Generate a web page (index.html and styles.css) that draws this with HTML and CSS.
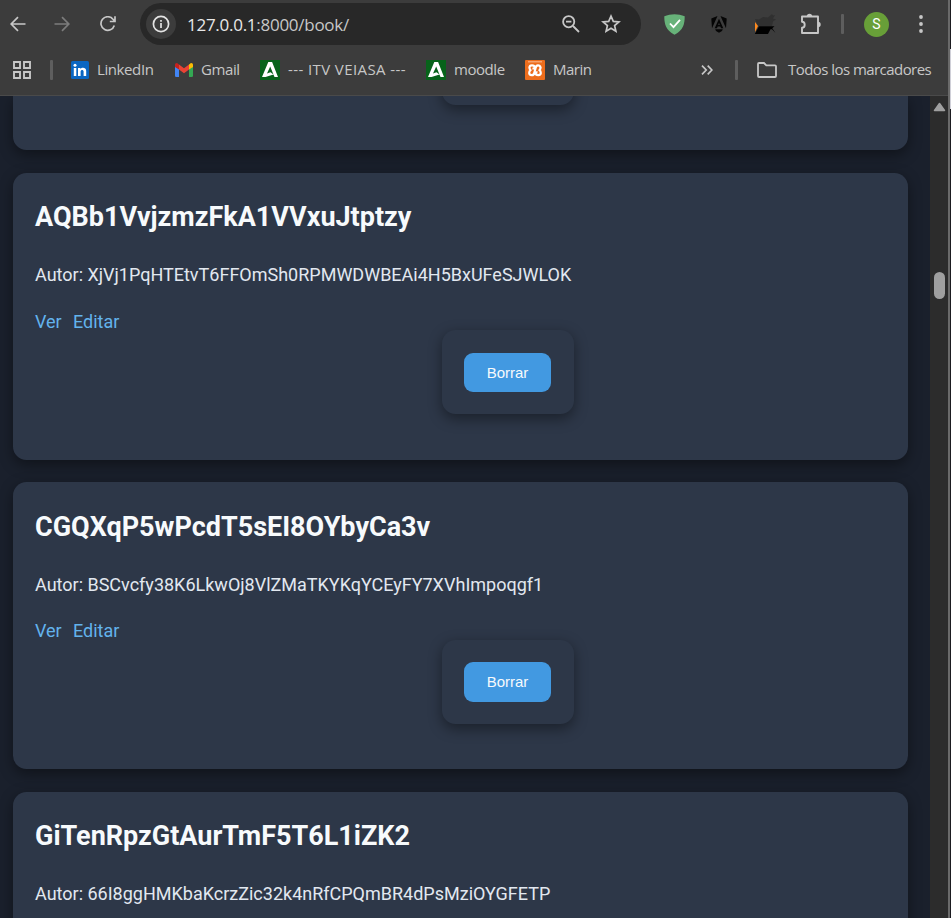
FILE: index.html
```html
<!DOCTYPE html>
<html lang="es">
<head>
<meta charset="utf-8">
<title>Libros</title>
<link rel="stylesheet" href="styles.css">
</head>
<body>
<div class="window">
  <header class="chrome">
    <div class="toolbar">
      <svg class="nav back" viewBox="0 0 16 16"><path d="M15.5 8H1.5M8 1.2 1.2 8 8 14.8"/></svg>
      <svg class="nav forward" viewBox="0 0 16 16"><path d="M.5 8h14M8 1.2 14.8 8 8 14.8"/></svg>
      <svg class="nav reload" viewBox="0 0 16 16"><path d="M14.3 9.5A6.8 6.8 0 1 1 13 3.2L15 5.4M15 .3v5.2H9.8"/></svg>
      <div class="omnibox">
        <span class="site"><svg viewBox="0 0 18 18"><circle cx="9" cy="9" r="7.6"/><path d="M9 8v5M9 5v1.8"/></svg></span>
        <span class="url"><b>127.0.0.1</b>:8000/book/</span>
        <svg class="lens" viewBox="0 0 18 18"><circle cx="6.7" cy="6.7" r="5.6"/><path d="M11 11l6 6M4 6.7h5.4"/></svg>
        <svg class="star" viewBox="0 0 20 20"><path d="M10 2.2l2.3 5.2 5.6.5-4.3 3.7 1.3 5.6-4.900-3-4.900 3 1.300-5.600L2.100 7.900l5.600-.5z"/></svg>
      </div>
      <svg class="shield" viewBox="0 0 21 21"><path fill="#67b279" d="M10.5.2C14 .2 17.500 1 20.700 2.200c0 8-1.500 13.800-10.200 18.500C1.800 16 .3 10.200.3 2.200 3.500 1 7 .2 10.500.2z"/><path d="M6 9.500l3.500 3.700 6.500-7.400" fill="none" stroke="#fff" stroke-width="1.800"/></svg>
      <svg class="angular" viewBox="0 0 16 17"><path fill="#050505" d="M6.500 0L.3 2.400l.7 9.800zM9.500 0l6.200 2.400-.7 9.800zM8 2.800l4.300 9.400h-2.200l-.8-1.800H6.700l-.8 1.800H3.700zm0 4L7.200 9h1.600zM4.200 13.300h7.600l-.8 1.800L8 16.800l-3-1.700z"/></svg>
      <svg class="wolf" viewBox="0 0 22 22"><path fill="#303030" d="M1 6l4 .5 4-2.500 5 .5 4-3.500 1 1.500 2-.5-2 3.500 3 1-3 2-1 4.500H4z"/><path fill="#ff8a1e" d="M1 9l3 4-3 6z"/><path fill="#000" d="M5 13.200h15.500l-2.200 2L21.500 20 18 16.200h-1.500L14 21H.8z"/></svg>
      <svg class="puzzle" viewBox="0 0 22 22"><path d="M2 3.500h16v16.500H2v-5.300c3.600 0 3.600-6 0-6z"/><path class="knob" d="M6.800 3.500a2.700 2.700 0 0 1 5.400 0zM18 8.800a2.700 2.700 0 0 1 0 5.400z"/></svg>
      <i class="sep tall"></i>
      <span class="avatar">S</span>
      <svg class="dots" viewBox="0 0 4 18"><circle cx="2" cy="2" r="1.900"/><circle cx="2" cy="9" r="1.900"/><circle cx="2" cy="16" r="1.900"/></svg>
    </div>
    <nav class="bookmarks">
      <svg class="apps" viewBox="0 0 18 18"><path d="M1 1h6v6H1zM11 1h6v6h-6zM1 11h6v6H1zM11 11h6v6h-6z"/></svg>
      <i class="sep first"></i>
      <svg class="bm-icon linkedin" viewBox="0 0 18 18"><rect width="18" height="18" rx="1.500" fill="#0a66c2"/><path fill="#fff" d="M2.800 7h2.500v8H2.800zM7 7h2.400v1.100c1.300-2 5.800-1.900 5.800 2V15h-2.600v-4.400c0-2.200-3-2-3 0V15H7z"/><circle cx="4" cy="4.300" r="1.500" fill="#fff"/></svg>
      <span class="label t1">LinkedIn</span>
      <svg class="bm-icon gmail" viewBox="0 0 18 14"><path fill="#4285f4" d="M0 3l4 3v8H1.300Q0 14 0 12.700z"/><path fill="#34a853" d="M18 3l-4 3v8h2.700q1.300 0 1.300-1.300z"/><path fill="#ea4335" d="M4 1.500l5 3.800 5-3.800v5L9 10.300 4 6.500z"/><path fill="#c5221f" d="M0 3V2C0 0 2-.6 3.300.9L4 1.500v5L0 4z"/><path fill="#fbbc04" d="M18 3V2c0-2-2-2.600-3.300-1.100l-.7.600v5l4-2.500z"/></svg>
      <span class="label t2">Gmail</span>
      <svg class="bm-icon" viewBox="0 0 20 20"><rect width="20" height="20" fill="#07631a"/><path fill="#fff" d="M8.300 2h3.800L18 17h-3.500L10.200 6.500 7 13.500l3.500-1.300 3 2.300L5.500 17H2z"/></svg>
      <span class="label t3">--- ITV VEIASA ---</span>
      <svg class="bm-icon" viewBox="0 0 20 20"><rect width="20" height="20" fill="#07631a"/><path fill="#fff" d="M8.300 2h3.800L18 17h-3.500L10.200 6.500 7 13.500l3.500-1.300 3 2.300L5.500 17H2z"/></svg>
      <span class="label t4">moodle</span>
      <svg class="bm-icon" viewBox="0 0 20 20"><rect width="20" height="20" rx="1" fill="#ed6d1c"/><path fill="#f7a36e" d="M3 1h14v1.500H3z"/><path d="M7.500 8.300Q9.800 9 9.800 7.300Q9.500 5.300 7 5.300T4.400 7.600Q4.400 9 5.600 10.200Q4.200 11.200 4.200 13T6.800 15.200Q9 15.200 9.400 12.500L10.600 8Q11 5.300 13 5.300T15.600 7.600Q15.600 9 14.400 10.200Q15.800 11.200 15.800 13T13.200 15.200Q10.600 15.200 10.600 13.300Q10.600 12 12.500 12.300" fill="none" stroke="#fff" stroke-width="2.200" stroke-linejoin="round"/></svg>
      <span class="label t5">Marin</span>
      <svg class="more" viewBox="0 0 12 10"><path d="M1 .7L5.200 5 1 9.300M6.700.7L10.900 5 6.700 9.300"/></svg>
      <i class="sep last"></i>
      <svg class="folder" viewBox="0 0 20 16"><path d="M1 14V2q0-1 1-1h5l2.300 2.300H18q1 0 1 1V14q0 1-1 1H2q-1 0-1-1z"/></svg>
      <span class="label t6">Todos los marcadores</span>
    </nav>
  </header>
  <div class="viewport">
    <main class="page">
      <article class="card tail"><div class="delete"></div></article>
      <article class="card">
        <h2>AQBb1VvjzmzFkA1VVxuJtptzy</h2>
        <p>Autor: XjVj1PqHTEtvT6FFOmSh0RPMWDWBEAi4H5BxUFeSJWLOK</p>
        <div class="links"><a>Ver</a><a>Editar</a></div>
        <form class="delete"><button type="button">Borrar</button></form>
      </article>
      <article class="card">
        <h2>CGQXqP5wPcdT5sEI8OYbyCa3v</h2>
        <p>Autor: BSCvcfy38K6LkwOj8VlZMaTKYKqYCEyFY7XVhImpoqgf1</p>
        <div class="links"><a>Ver</a><a>Editar</a></div>
        <form class="delete"><button type="button">Borrar</button></form>
      </article>
      <article class="card">
        <h2>GiTenRpzGtAurTmF5T6L1iZK2</h2>
        <p>Autor: 66I8ggHMKbaKcrzZic32k4nRfCPQmBR4dPsMziOYGFETP</p>
      </article>
    </main>
    <div class="scrollbar">
      <svg viewBox="0 0 12 10"><path d="M6 1.500L11 8.500H1z"/></svg>
      <span class="thumb"></span>
    </div>
  </div>
</div>
<div class="edge"></div>
<div class="behind"><div class="behind-light"></div></div>
</body>
</html>
```
FILE: styles.css
```css
* { box-sizing: border-box; }
body {
  margin: 0;
  height: 918px;
  display: flex;
  overflow: hidden;
  background: #1a202c;
}
svg { display: block; flex: none; }
.window { width: 948px; height: 918px; display: flex; flex-direction: column; }
.edge { width: 2px; background: #6a6a6a; }
.behind { width: 1px; padding-top: 49px; background: #1b1b20; }
.behind-light { height: 60px; background: #d0d0d8; }

.chrome {
  height: 96px;
  flex: none;
  background: #3c3c3c;
  border-bottom: 1px solid #4a4a4a;
  font-family: "Open Sans", "Noto Sans", sans-serif;
  color: #c7c7c7;
}
.toolbar { height: 48px; display: flex; align-items: center; padding-left: 10px; }
.nav { width: 16px; height: 16px; fill: none; stroke: #c7c7c7; stroke-width: 1.7; }
.forward { margin-left: 28px; stroke: #7c7c7c; }
.reload { margin-left: 30px; }
.omnibox {
  width: 501px;
  height: 42px;
  margin-left: 24px;
  padding-left: 6px;
  border-radius: 21px;
  background: #282828;
  display: flex;
  align-items: center;
}
.site { width: 30px; height: 30px; border-radius: 50%; background: #3c3c3c; display: flex; align-items: center; justify-content: center; }
.site svg { width: 18px; height: 18px; fill: none; stroke: #e3e3e3; stroke-width: 1.7; }
.url { width: 375px; margin-left: 11px; font-size: 17px; letter-spacing: -0.27px; white-space: nowrap; }
.url b { font-weight: 400; color: #e8e8e8; }
.lens { width: 18px; height: 18px; fill: none; stroke: #c7c7c7; stroke-width: 1.8; }
.star { width: 20px; height: 20px; margin-left: 21px; fill: none; stroke: #c7c7c7; stroke-width: 1.7; }
.shield { width: 21px; height: 21px; margin-left: 23px; }
.angular { width: 16px; height: 17px; margin-left: 26px; }
.wolf { width: 22px; height: 22px; margin-left: 27px; }
.puzzle { width: 22px; height: 22px; margin-left: 24px; fill: none; stroke: #c7c7c7; stroke-width: 1.9; stroke-linejoin: round; }
.knob { fill: #c7c7c7; stroke: none; }
.sep { display: block; flex: none; width: 3px; height: 20px; border-radius: 1px; background: #5e5e5e; }
.tall { margin-left: 19px; }
.avatar {
  width: 25px;
  height: 25px;
  margin-left: 20px;
  border-radius: 50%;
  background: #689f38;
  color: #fff;
  font: 14px/25px Roboto, sans-serif;
  text-align: center;
}
.dots { width: 4px; height: 18px; margin-left: 30px; fill: #c7c7c7; }

.bookmarks { height: 44px; display: flex; align-items: center; padding-left: 13px; }
.apps { width: 18px; height: 18px; fill: none; stroke: #c7c7c7; stroke-width: 1.9; }
.first { margin-left: 19px; }
.bm-icon { width: 20px; height: 20px; }
.linkedin { width: 18px; height: 18px; margin-left: 18px; }
.gmail { width: 18px; height: 14px; }
.label { flex: none; margin: 0 0 2px 8px; font-size: 15px; line-height: 20px; white-space: nowrap; letter-spacing: -0.4px; }
.t1 { width: 78px; }
.t2 { width: 59px; }
.t3 { width: 138px; letter-spacing: 0.4px; }
.t4 { width: 71px; letter-spacing: -0.45px; }
.t5 { width: 148px; letter-spacing: -0.5px; }
.t6 { margin-left: 11px; letter-spacing: -0.55px; }
.more { width: 12px; height: 10px; fill: none; stroke: #c7c7c7; stroke-width: 1.7; }
.last { margin-left: 22px; }
.folder { width: 20px; height: 16px; margin-left: 19px; fill: none; stroke: #c7c7c7; stroke-width: 1.8; }

.viewport { flex: 1; min-height: 0; display: flex; overflow: hidden; }
.page {
  width: 930px;
  height: 822px;
  padding: 0 22px 0 13px;
  background: #1a202c;
  overflow: hidden;
  display: flex;
  flex-direction: column;
  font: 18px/28.8px Roboto, sans-serif;
  color: #e2e8f0;
}
.card {
  flex: none;
  height: 287px;
  margin-bottom: 22.5px;
  padding: 23.8px 22px;
  border-radius: 13.5px;
  background: #2d3748;
  box-shadow: 0 4.5px 13.5px rgba(0, 0, 0, 0.4);
}
h2 { margin: 0 0 21.9px; height: 43px; font-size: 27px; line-height: 43px; font-weight: 700; color: #f7fafc; }
p { margin: 0 0 17.7px; height: 28.8px; }
.links { height: 28.8px; display: flex; gap: 11.25px; color: #63b3ed; }
.delete {
  width: 132px;
  height: 84px;
  margin: -6.2px 0 0 407px;
  padding: 22.3px 22px;
  border-radius: 13.5px;
  background: #2d3748;
  box-shadow: 0 4.5px 13.5px rgba(0, 0, 0, 0.4);
}
.tail { height: 54.1px; padding-top: 0; border-radius: 0 0 13.5px 13.5px; overflow: hidden; }
.tail .delete { margin-top: -75px; }
button {
  display: block;
  width: 87px;
  height: 39.4px;
  padding: 0;
  border: 0;
  border-radius: 9px;
  background: #4299e1;
  color: #f7fafc;
  font: 15px "Liberation Sans", sans-serif;
}
.scrollbar { width: 18px; background: #2c2c2c; display: flex; flex-direction: column; padding: 6px 0 0 3px; }
.scrollbar svg { width: 13px; height: 10px; fill: #9f9f9f; stroke: #9f9f9f; stroke-width: 1.5; stroke-linejoin: round; }
.thumb { width: 11px; height: 27px; margin: 160px 0 0 1px; border-radius: 6px; background: #9f9f9f; }
```
